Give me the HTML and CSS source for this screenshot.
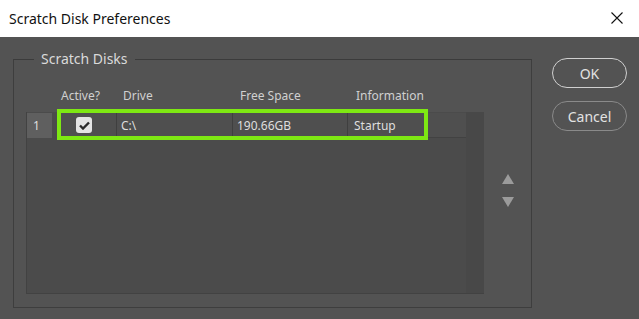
FILE: index.html
```html
<!DOCTYPE html>
<html lang="en">
<head>
    <meta charset="UTF-8">
    <meta name="viewport" content="width=device-width, initial-scale=1.0">
    <title>Scratch Disk Preferences</title>
    <link rel="stylesheet" href="styles.css">
</head>
<body>
    <div class="titlebar">
        <div class="title">Scratch Disk Preferences</div>
        <div class="close">
            <svg width="12" height="12" viewBox="0 0 12 12"><path d="M0.5 0.5 L11.5 11.5 M11.5 0.5 L0.5 11.5" stroke="#111" stroke-width="1.1" fill="none"/></svg>
        </div>
    </div>

    <div class="dialog">
        <fieldset class="group">
            <legend>Scratch Disks</legend>
            <div class="grouprow">
                <div class="tablewrap">
                    <div class="thead">
                        <div class="c-num"></div>
                        <div class="c-active">Active?</div>
                        <div class="c-drive">Drive</div>
                        <div class="c-free">Free Space</div>
                        <div class="c-info">Information</div>
                    </div>
                    <div class="tbody">
                        <div class="row">
                            <div class="c-num num">1</div>
                            <div class="c-active cell"><span class="check">
                                <svg width="11" height="9" viewBox="0 0 11 9"><path d="M1 4.5 L4 7.5 L10 1.5" stroke="#2b2b2b" stroke-width="2.4" fill="none"/></svg>
                            </span></div>
                            <div class="c-drive cell">C:\</div>
                            <div class="c-free cell">190.66GB</div>
                            <div class="c-info cell">Startup</div>
                        </div>
                        <div class="highlight"></div>
                    </div>
                </div>
                <div class="arrows">
                    <svg width="12" height="10" viewBox="0 0 12 10"><path d="M6 0 L12 10 L0 10 Z" fill="#9b9b9b"/></svg>
                    <svg width="12" height="10" viewBox="0 0 12 10"><path d="M0 0 L12 0 L6 10 Z" fill="#9b9b9b"/></svg>
                </div>
            </div>
        </fieldset>

        <div class="buttons">
            <button class="btn primary">OK</button>
            <button class="btn">Cancel</button>
        </div>
    </div>
</body>
</html>
```

FILE: styles.css
```css
body{
    margin: 0;
    width: 639px;
    height: 319px;
    background-color: #535353;
    font-family: 'Noto Sans', 'Open Sans', sans-serif;
    overflow: hidden;
}

.titlebar{
    height: 37px;
    background-color: #ffffff;
    display: flex;
    align-items: center;
    justify-content: space-between;
    padding: 0 16px 0 9px;
}

.title{
    font-size: 14px;
    color: #111;
    padding-bottom: 1px;
}

.close{
    display: flex;
    padding-bottom: 2px;
}

.dialog{
    display: flex;
    padding: 13px 13px 0 13px;
    gap: 20px;
}

.group{
    margin: 0;
    width: 518px;
    height: 258px;
    box-sizing: border-box;
    border: 1px solid #3e3e3e;
    border-top-color: #3b3b3b;
    padding: 18px 0 12px 12px;
}

.group legend{
    font-size: 14px;
    color: #dadada;
    padding: 0 7px;
    margin-left: 8px;
    line-height: 18px;
}

.grouprow{
    display: flex;
}

.tablewrap{
    width: 458px;
    display: flex;
    flex-direction: column;
}

.thead{
    display: flex;
    height: 26px;
    align-items: flex-start;
    padding-top: 1px;
    box-sizing: border-box;
    font-size: 12px;
    color: #d0d0d0;
}

.thead div{ box-sizing: border-box; }
.thead .c-active{ padding-left: 4px; }
.thead .c-drive{ padding-left: 7px; }
.thead .c-free{ padding-left: 8px; }
.thead .c-info{ padding-left: 9px; }

.tbody{
    position: relative;
    height: 182px;
    background-color: #4b4b4b;
    border-left: 1px solid #424242;
    border-bottom: 1px solid #424242;
    box-sizing: border-box;
    background-image: linear-gradient(to right, transparent 439px, #484848 439px);
}

.c-num{ width: 31px; }
.c-active{ width: 59px; }
.c-drive{ width: 116px; }
.c-free{ width: 115px; }
.c-info{ width: 118px; }

.row{
    display: flex;
    height: 26px;
    padding-top: 1px;
    box-sizing: border-box;
    font-size: 12px;
    color: #dedede;
}

.num{
    width: 25px;
    margin-right: 6px;
    background-color: #5f5f5f;
    padding-left: 6px;
    box-sizing: border-box;
    display: flex;
    align-items: center;
}

.cell{
    display: flex;
    align-items: center;
    box-sizing: border-box;
    background-color: #4f4f4f;
    border-right: 1px solid #3f3f3f;
    border-bottom: 1px solid #424242;
    padding-left: 4px;
}

.c-active.cell{
    padding-left: 18px;
}

.c-info.cell{
    padding-left: 6px;
    border-right: none;
}

.check{
    width: 16px;
    height: 16px;
    background-color: #e4e4e4;
    border-radius: 3px;
    display: flex;
    align-items: center;
    justify-content: center;
}

.highlight{
    position: absolute;
    left: 30px;
    top: -3px;
    width: 371px;
    height: 31px;
    box-sizing: border-box;
    border: 4px solid #7ee813;
}

.arrows{
    width: 47px;
    display: flex;
    flex-direction: column;
    align-items: center;
    gap: 13px;
    padding-top: 88px;
}

.buttons{
    display: flex;
    flex-direction: column;
    gap: 13px;
    padding-top: 8px;
}

.btn{
    width: 75px;
    height: 30px;
    border-radius: 15px;
    background-color: #535353;
    border: 1px solid #8a8a8a;
    color: #e2e2e2;
    font-family: 'Noto Sans', 'Open Sans', sans-serif;
    font-size: 14px;
    padding: 0;
}

.btn.primary{
    border-color: #d0d0d0;
}
```
